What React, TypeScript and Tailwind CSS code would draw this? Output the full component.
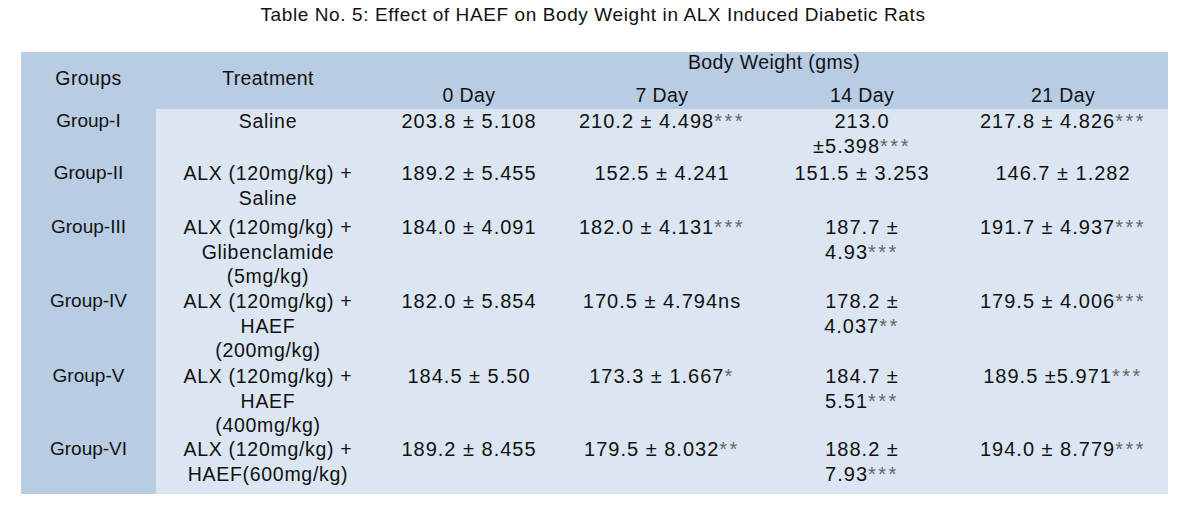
const rows = [
  { group: "Group-I", h: "h-[52px]", treatment: ["Saline"], d0: ["203.8 ± 5.108"], d7: [["210.2 ± 4.498", "***"]], d14: [["213.0", ""], ["±5.398", "***"]], d21: [["217.8 ± 4.826", "***"]] },
  { group: "Group-II", h: "h-[54px]", treatment: ["ALX (120mg/kg) +", "Saline"], d0: ["189.2 ± 5.455"], d7: [["152.5 ± 4.241", ""]], d14: [["151.5 ± 3.253", ""]], d21: [["146.7 ± 1.282", ""]] },
  { group: "Group-III", h: "h-[74px]", treatment: ["ALX (120mg/kg) +", "Glibenclamide", "(5mg/kg)"], d0: ["184.0 ± 4.091"], d7: [["182.0 ± 4.131", "***"]], d14: [["187.7 ±", ""], ["4.93", "***"]], d21: [["191.7 ± 4.937", "***"]] },
  { group: "Group-IV", h: "h-[75px]", treatment: ["ALX (120mg/kg) +", "HAEF", "(200mg/kg)"], d0: ["182.0 ± 5.854"], d7: [["170.5 ± 4.794ns", ""]], d14: [["178.2 ±", ""], ["4.037", "**"]], d21: [["179.5 ± 4.006", "***"]] },
  { group: "Group-V", h: "h-[73px]", treatment: ["ALX (120mg/kg) +", "HAEF", "(400mg/kg)"], d0: ["184.5 ± 5.50"], d7: [["173.3 ± 1.667", "*"]], d14: [["184.7 ±", ""], ["5.51", "***"]], d21: [["189.5 ±5.971", "***"]] },
  { group: "Group-VI", h: "h-[57px]", treatment: ["ALX (120mg/kg) +", "HAEF(600mg/kg)"], d0: ["189.2 ± 8.455"], d7: [["179.5 ± 8.032", "**"]], d14: [["188.2 ±", ""], ["7.93", "***"]], d21: [["194.0 ± 8.779", "***"]] },
];

const cols = "grid grid-cols-[135px_224px_178px_208px_192px_210px]";

function Lines({ items }: { items: string[] }) {
  return (
    <div className="flex flex-col items-center text-[19.5px] tracking-[0.7px]">
      {items.map((t, i) => (
        <span key={i} className="whitespace-pre">{t}</span>
      ))}
    </div>
  );
}

// value lines, significance stars drawn lighter and spread out
function Vals({ items }: { items: string[][] }) {
  return (
    <div className="flex flex-col items-center text-[20px]">
      {items.map(([v, s], i) => (
        <span key={i} className="whitespace-pre tracking-[1px]">
          {v}
          {s && <span className="text-[#666] tracking-[2.5px]">{s}</span>}
        </span>
      ))}
    </div>
  );
}

export default function App() {
  return (
    <div className="w-[1186px] h-[507px] bg-white text-[#111] font-['Liberation_Sans',Arial,sans-serif] text-[19px]">
      <h1 className="pt-[3px] leading-[24px] text-center tracking-[0.6px]">
        Table No. 5: Effect of HAEF on Body Weight in ALX Induced Diabetic Rats
      </h1>

      <div className="ml-[21px] mt-[25px] w-[1147px]">
        {/* Header */}
        <div className={`${cols} grid-rows-[20px_37px] h-[57px] bg-[#b8cce4] text-[19.5px] tracking-[0.4px]`}>
          <div className="row-span-2 flex items-center justify-center pb-[5px] leading-[24px]">Groups</div>
          <div className="row-span-2 flex items-center justify-center pb-[5px] leading-[24px]">Treatment</div>
          <div className="col-span-4 text-center leading-[20px]">Body Weight (gms)</div>
          {["0 Day", "7 Day", "14 Day", "21 Day"].map((d) => (
            <div key={d} className="flex items-end justify-center pb-[2px] leading-[24px]">{d}</div>
          ))}
        </div>

        {/* Body */}
        {rows.map((r) => (
          <div key={r.group} className={`${cols} ${r.h} leading-[24.5px]`}>
            <div className="bg-[#b8cce4] flex justify-center">{r.group}</div>
            <div className="bg-[#dce6f2]"><Lines items={r.treatment} /></div>
            <div className="bg-[#dce6f2]"><Vals items={[[r.d0[0], ""]]} /></div>
            <div className="bg-[#dce6f2]"><Vals items={r.d7} /></div>
            <div className="bg-[#dce6f2]"><Vals items={r.d14} /></div>
            <div className="bg-[#dce6f2]"><Vals items={r.d21} /></div>
          </div>
        ))}
      </div>
    </div>
  );
}
